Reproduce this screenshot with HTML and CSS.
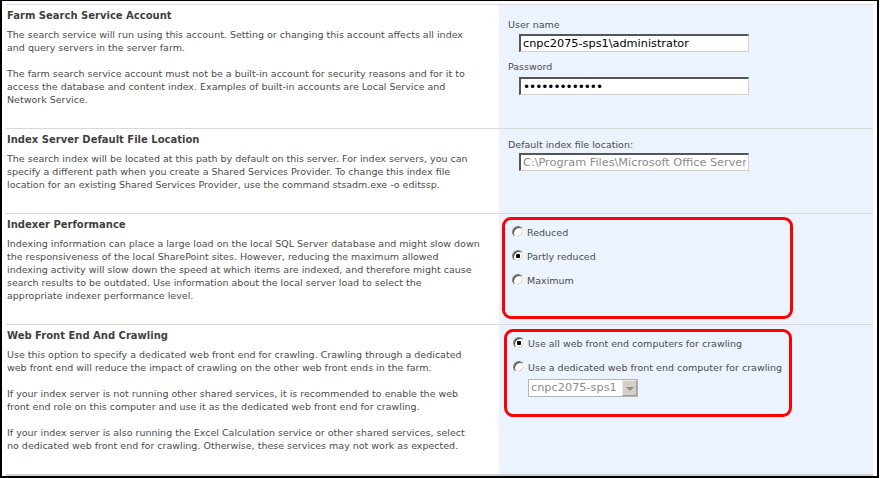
FILE: index.html
```html
<!DOCTYPE html>
<html lang="en">
<head>
  <meta charset="UTF-8" />
  <meta name="viewport" content="width=device-width, initial-scale=1.0"/>
  <title>Configure Search Service Settings</title>
  <link rel="stylesheet" href="styles.css">
</head>
<body>

  <div class="frame">
    <div class="settings">

      <section class="row row-account">
        <div class="info">
          <h2>Farm Search Service Account</h2>
          <p>The search service will run using this account. Setting or changing this account affects all index<br>and query servers in the server farm.</p>
          <p>The farm search service account must not be a built-in account for security reasons and for it to<br>access the database and content index. Examples of built-in accounts are Local Service and<br>Network Service.</p>
        </div>
        <div class="controls">
          <label class="field-label" for="user">User name</label>
          <input type="text" class="text-box" id="user" value="cnpc2075-sps1\administrator" />
          <label class="field-label gap" for="pass">Password</label>
          <input type="password" class="text-box tight" id="pass" value="passwordpass1" />
        </div>
      </section>

      <section class="row row-location">
        <div class="info">
          <h2>Index Server Default File Location</h2>
          <p>The search index will be located at this path by default on this server. For index servers, you can<br>specify a different path when you create a Shared Services Provider. To change this index file<br>location for an existing Shared Services Provider, use the command stsadm.exe -o editssp.</p>
        </div>
        <div class="controls">
          <label class="field-label" for="location">Default index file location:</label>
          <input type="text" class="text-box" id="location" value="C:\Program Files\Microsoft Office Servers\12.0\Data\Office Server\Applications" disabled />
        </div>
      </section>

      <section class="row row-performance">
        <div class="info">
          <h2>Indexer Performance</h2>
          <p>Indexing information can place a large load on the local SQL Server database and might slow down<br>the responsiveness of the local SharePoint sites. However, reducing the maximum allowed<br>indexing activity will slow down the speed at which items are indexed, and therefore might cause<br>search results to be outdated. Use information about the local server load to select the<br>appropriate indexer performance level.</p>
        </div>
        <div class="controls">
          <div class="marked marked-performance">
            <label class="option"><input type="radio" name="perf" class="radio" /> Reduced</label>
            <label class="option"><input type="radio" name="perf" class="radio" checked /> Partly reduced</label>
            <label class="option"><input type="radio" name="perf" class="radio" /> Maximum</label>
          </div>
        </div>
      </section>

      <section class="row row-crawling">
        <div class="info">
          <h2>Web Front End And Crawling</h2>
          <p>Use this option to specify a dedicated web front end for crawling. Crawling through a dedicated<br>web front end will reduce the impact of crawling on the other web front ends in the farm.</p>
          <p>If your index server is not running other shared services, it is recommended to enable the web<br>front end role on this computer and use it as the dedicated web front end for crawling.</p>
          <p>If your index server is also running the Excel Calculation service or other shared services, select<br>no dedicated web front end for crawling. Otherwise, these services may not work as expected.</p>
        </div>
        <div class="controls">
          <div class="marked marked-crawling">
            <label class="option"><input type="radio" name="wfe" class="radio" checked /> Use all web front end computers for crawling</label>
            <label class="option"><input type="radio" name="wfe" class="radio" /> Use a dedicated web front end computer for crawling</label>
            <div class="dropdown">
              <span class="dropdown-value">cnpc2075-sps1</span>
              <span class="dropdown-button"></span>
            </div>
          </div>
        </div>
      </section>

    </div>
  </div>

</body>
</html>
```

FILE: styles.css
```css
body {
  margin: 0;
  background-color: #fff;
  font-family: "DejaVu Sans", Tahoma, sans-serif;
  font-size: 9.5px;
  color: #4c4c4c;
}

.frame {
  width: 879px;
  height: 478px;
  box-sizing: border-box;
  border-top: 1px solid #000;
  border-left: 2px solid #000;
  border-right: 2px solid #000;
  border-bottom: 2px solid #000;
  padding: 3px 4px 0 4px;
}

.settings {
  border-bottom: 2px solid #d0d0d0;
}

.row {
  display: grid;
  grid-template-columns: 493px 374px;
  border-top: 1px solid #d8d8d8;
  box-sizing: border-box;
}

.row-account { height: 124px; }
.row-location { height: 85px; }
.row-performance { height: 111px; }
.row-crawling { height: 150px; }

.info {
  padding: 4px 0 0 1px;
  white-space: nowrap;
}

.info h2 {
  margin: 0;
  font-size: 10px;
  line-height: 14px;
  font-weight: bold;
  color: #3f3f3f;
}

.info p {
  margin: 5px 0 13px;
  line-height: 13px;
}

.info h2 + p {
  margin-top: 5px;
}

.info p + p {
  margin-top: 0;
}

.controls {
  background-color: #ebf3fe;
}

.row-account .controls {
  padding: 13px 0 0 9px;
}

.row-location .controls {
  padding: 9px 0 0 9px;
}

.row-performance .controls {
  padding: 3px 0 0 3px;
}

.row-crawling .controls {
  padding: 4px 0 0 5px;
}

.field-label {
  display: block;
  line-height: 13px;
}

.field-label.gap {
  margin-top: 8px;
}

.text-box {
  display: block;
  box-sizing: border-box;
  width: 230px;
  height: 18px;
  margin: 3px 0 0 11px;
  padding: 0 2px;
  font-family: "DejaVu Sans", Tahoma, sans-serif;
  font-size: 11.3px;
  color: #000;
  background-color: #fff;
  border-style: solid;
  border-width: 2px 1px 1px 2px;
  border-color: #555 #d4d0c8 #d4d0c8 #555;
  outline: none;
}

.text-box.tight {
  margin-top: 4px;
  font-size: 12px;
  letter-spacing: -1px;
}

.row-location .text-box {
  margin-top: 2px;
}

.text-box:disabled {
  color: #8c8c8c;
  -webkit-text-fill-color: #8c8c8c;
  background-color: #fff;
}

.marked {
  box-sizing: border-box;
  border: 3px solid #ff0000;
  border-radius: 9px;
}

.marked-performance {
  width: 291px;
  height: 102px;
  padding: 1px 0 0 7px;
}

.marked-crawling {
  width: 288px;
  height: 88px;
  padding: 0 0 0 6px;
}

.option {
  display: flex;
  align-items: center;
  gap: 3px;
  height: 22px;
  margin-bottom: 2px;
  white-space: nowrap;
}

.radio {
  appearance: none;
  -webkit-appearance: none;
  width: 12px;
  height: 12px;
  margin: 0;
  flex: none;
  box-sizing: border-box;
  border-radius: 50%;
  border: 1px solid;
  border-color: #808080 #fff #fff #808080;
  background-color: #fff;
  box-shadow: inset 1px 1px 0 #404040, inset -1px -1px 0 #d4d0c8;
}

.radio:checked {
  background: radial-gradient(circle at center, #000 0 2px, #fff 2.5px);
}

.dropdown {
  display: flex;
  box-sizing: border-box;
  width: 110px;
  height: 18px;
  margin: -1px 0 0 15px;
  border: 1px solid #b4b4b4;
  background-color: #fff;
}

.dropdown-value {
  flex: 1;
  overflow: hidden;
  padding-left: 2px;
  font-size: 11.3px;
  line-height: 16px;
  white-space: nowrap;
  color: #8c8c8c;
}

.dropdown-button {
  flex: none;
  width: 15px;
  box-sizing: border-box;
  border: 1px solid #e8e8e8;
  border-right-color: #a0a0a0;
  border-bottom-color: #a0a0a0;
  background-color: #d4d0c8;
  position: relative;
}

.dropdown-button::after {
  content: "";
  position: absolute;
  left: 3px;
  top: 6px;
  border-left: 4px solid transparent;
  border-right: 4px solid transparent;
  border-top: 4px solid #8c8c8c;
}
```
